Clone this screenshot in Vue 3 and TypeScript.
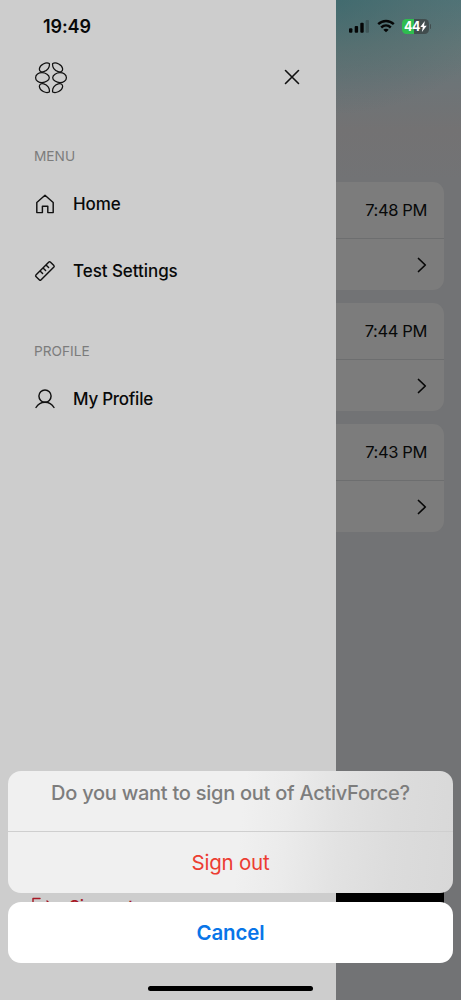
<script setup lang="ts">
interface Visit {
  time: string
}

const visits: Visit[] = [{ time: '7:48 PM' }, { time: '7:44 PM' }, { time: '7:43 PM' }]
</script>

<template>
  <div class="screen">
    <main class="dashboard">
      <section v-for="visit in visits" :key="visit.time" class="card">
        <div class="card-time"><span>{{ visit.time }}</span></div>
        <div class="card-link">
          <svg width="10" height="16" viewBox="0 0 10 16">
            <path d="M1.500 1.500 8.300 8l-6.800 6.500" />
          </svg>
        </div>
      </section>
      <div class="primary-button"></div>
    </main>

    <aside class="drawer">
      <header class="drawer-head">
        <svg class="logo" width="34" height="32" viewBox="0 0 34 32">
          <path d="M15.300 1.500C12-.2 5.800 2.700 5.400 6.800c-.2 2.800 2.100 3.500 4.400 2.800 3.500-1 6.300-4.500 5.500-8.100Z" />
          <path d="M18.700 1.500c3.300-1.700 9.500 1.200 9.900 5.300.2 2.800-2.100 3.500-4.400 2.800-3.500-1-6.300-4.500-5.500-8.100Z" />
          <path d="M1.600 15.700c0-3 3-5 6.400-5 3.600 0 7.300 2.600 7.300 5s-3.700 5-7.300 5c-3.400 0-6.400-2-6.400-5Z" />
          <path d="M32.400 15.700c0-3-3-5-6.400-5-3.600 0-7.300 2.600-7.300 5s3.700 5 7.300 5c3.400 0 6.400-2 6.400-5Z" />
          <path d="M15.300 30c-3.300 1.700-9.500-1.200-9.900-5.300-.2-2.800 2.100-3.500 4.400-2.800 3.500 1 6.300 4.500 5.500 8.100Z" />
          <path d="M18.700 30c3.300 1.700 9.500-1.200 9.900-5.300.2-2.800-2.100-3.500-4.400-2.800-3.500 1-6.300 4.500-5.500 8.100Z" />
        </svg>
        <svg class="close" width="16" height="16" viewBox="0 0 16 16">
          <path d="m1.500 1.500 13 13m0-13-13 13" />
        </svg>
      </header>
      <nav>
        <h2 class="menu-title">MENU</h2>
        <a class="item">
          <svg width="22" height="22" viewBox="0 0 22 22">
            <path d="M2.800 9.500 11 2.200l8.200 7.300v10.100h-5.400v-6.300H8.400v6.300H2.800Z" />
          </svg>
          <span class="home">Home</span>
        </a>
        <a class="item">
          <svg width="22" height="22" viewBox="0 0 22 22">
            <path d="m1.900 15.100 13-13.100q.7-.6 1.400 0l3.600 3.600q.6.700 0 1.400l-13 13q-.7.600-1.400 0l-3.600-3.600q-.6-.6 0-1.300ZM6 11l2.600 2.600M9 8l2.600 2.600m.4-5.700 2.600 2.600" />
          </svg>
          <span class="settings">Test Settings</span>
        </a>
        <h2 class="profile-title">PROFILE</h2>
        <a class="item">
          <svg width="22" height="22" viewBox="0 0 22 22">
            <circle cx="11" cy="8.100" r="6.100" />
            <path d="M2 19.500c2-3.400 5.200-5.300 9-5.300s7 1.900 9 5.300" />
          </svg>
          <span class="profile">My Profile</span>
        </a>
      </nav>
      <a class="sign-out">
        <svg width="22" height="20" viewBox="0 0 22 20">
          <path d="M8 1.500H1v17h7M7 9h13m-5-5 5 5-5 5" />
        </svg>
        <span>Sign out</span>
      </a>
    </aside>

    <div class="status">
      <span class="clock">19:49</span>
      <div class="indicators">
        <svg width="21" height="14" viewBox="0 0 21 14">
          <rect x="1" y="9.200" width="3.400" height="4.600" rx="1" />
          <rect x="6.700" y="7" width="3.400" height="6.800" rx="1" />
          <rect x="12.300" y="3.800" width="3.400" height="10" rx="1" />
          <rect x="17.600" y="1" width="3.400" height="12.800" rx="1" opacity=".22" />
        </svg>
        <svg class="wifi" width="18" height="14" viewBox="0 0 18 14">
          <path class="wave" d="M1.200 5.200c4.500-4.300 11.100-4.300 15.600 0M4.200 8.500c2.900-2.700 6.700-2.700 9.600 0" />
          <path d="M9 13.300 6.300 10.700q2.700-2.100 5.400 0Z" />
        </svg>
        <div class="battery">
          <span>44</span>
          <svg width="7" height="11" viewBox="0 0 7 11">
            <path d="M4.800 0 .3 6.100h2.500L1.900 11 6.700 4.700H4Z" />
          </svg>
        </div>
        <i class="battery-tip"></i>
      </div>
    </div>

    <div class="sheet">
      <div class="actions">
        <div class="question"><span>Do you want to sign out of ActivForce?</span></div>
        <div class="confirm"><span>Sign out</span></div>
      </div>
      <div class="cancel"><span>Cancel</span></div>
      <div class="home-bar"></div>
    </div>
  </div>
</template>

<style>
body {
  margin: 0;
}
</style>

<style scoped>
.screen {
  position: relative;
  width: 461px;
  height: 1000px;
  overflow: hidden;
  color: #080909;
  font-family: Inter, 'Liberation Sans', sans-serif;
}
svg {
  display: block;
  flex: none;
}
.dashboard {
  box-sizing: border-box;
  height: 1000px;
  padding: 182px 17px 0 0;
  display: flex;
  flex-direction: column;
  gap: 13px;
  position: relative;
  background:
    radial-gradient(ellipse 180px 120px at 325px -5px, rgba(50, 98, 102, .6), rgba(65, 100, 102, .35) 50%, transparent),
    linear-gradient(#54767a, #647778 45px, #6d7477 85px, #737273 130px, #727375 180px);
}
.card {
  height: 108px;
  border-radius: 11px;
  background: #7c7c7c;
}
.card-time,
.card-link {
  box-sizing: border-box;
  display: flex;
  align-items: center;
  justify-content: flex-end;
  padding-right: 17px;
}
.card-time {
  height: 56.500px;
  border-bottom: 1px solid #6d6e6f;
  font-size: 16.500px;
  letter-spacing: -.38px;
}
.card-link {
  height: 52px;
}
.card-link svg {
  fill: none;
  stroke: #080808;
  stroke-width: 1.700;
  stroke-linecap: round;
  stroke-linejoin: round;
}
.primary-button {
  height: 60px;
  margin-top: 314px;
  background: #000;
}
.drawer {
  position: absolute;
  inset: 0 auto 0 0;
  box-sizing: border-box;
  width: 336.300px;
  padding: 62px 36px 0 34px;
  display: flex;
  flex-direction: column;
  background: #cdcdcd;
}
.drawer svg {
  fill: none;
  stroke: #111;
  stroke-width: 1.450;
  stroke-linecap: round;
  stroke-linejoin: round;
}
.drawer-head {
  height: 32px;
  display: flex;
  align-items: center;
  justify-content: space-between;
}
.drawer .logo {
  stroke-width: 1.250;
}
.drawer .close {
  margin-top: -2px;
  stroke-width: 1.600;
}
nav {
  padding-top: 51.500px;
}
h2 {
  margin: 0;
  height: 20px;
  line-height: 20px;
  font-size: 13.700px;
  font-weight: 400;
  color: #7c7c7c;
}
.profile-title {
  margin-top: 36px;
}
.item {
  height: 67px;
  margin-top: 5px;
  display: flex;
  align-items: center;
  gap: 17px;
  font-size: 17px;
  font-weight: 500;
  letter-spacing: -.06px;
}
.profile {
  letter-spacing: -.25px;
}
.item + .item {
  margin-top: 0;
}
.sign-out {
  margin-top: auto;
  margin-bottom: 82px;
  margin-left: -2px;
  height: 22px;
  display: flex;
  align-items: center;
  gap: 15px;
  color: #a71925;
  font-size: 17px;
  font-weight: 500;
  letter-spacing: -.3px;
}
.drawer .sign-out svg {
  stroke: #a71925;
}
.status {
  position: absolute;
  inset: 0 0 auto 0;
  height: 52px;
  padding: 0 30px 0 43px;
  display: flex;
  align-items: center;
  justify-content: space-between;
}
.clock {
  font-size: 18px;
  font-weight: 600;
  letter-spacing: -.1px;
}
.indicators {
  display: flex;
  align-items: center;
  fill: #050606;
}
.wifi {
  margin: 0 7px 0 8px;
}
.wave {
  fill: none;
  stroke: #050606;
  stroke-width: 2.400;
}
.battery {
  width: 27px;
  height: 15px;
  border-radius: 4.500px;
  display: flex;
  align-items: center;
  justify-content: center;
  background: linear-gradient(90deg, #2fbd4f 44%, #414d4e 44%);
  color: #fff;
  fill: #fff;
  font-size: 12.500px;
  font-weight: 700;
  letter-spacing: -.5px;
}
.battery-tip {
  width: 1px;
  height: 5px;
  margin-left: 1px;
  border-radius: 0 2px 2px 0;
  background: #414d4e;
}
.sheet {
  position: absolute;
  inset: 770.500px 8px 0 8px;
  display: flex;
  flex-direction: column;
  align-items: center;
  text-align: center;
  font-size: 20.500px;
}
.actions {
  width: 100%;
  height: 122.500px;
  border-radius: 13px;
  overflow: hidden;
  background: linear-gradient(96deg, #f0f0f0 52%, #ebebeb 62%, #e2e2e2 74%, #dcdcdc 86%, #d8d8d8);
}
.question {
  box-sizing: border-box;
  height: 61px;
  line-height: 44px;
  border-bottom: 1px solid #cfcfcf;
  color: #7d7d7d;
  font-weight: 500;
  font-size: 20px;
  letter-spacing: -.26px;
}
.confirm {
  line-height: 62px;
  color: #ec3d32;
  letter-spacing: -.2px;
}
.cancel {
  width: 100%;
  height: 61px;
  line-height: 61px;
  margin-top: 9px;
  border-radius: 13px;
  background: #fff;
  color: #0875e8;
  font-weight: 600;
  letter-spacing: -.1px;
}
.home-bar {
  width: 165px;
  height: 5px;
  margin-top: 23px;
  border-radius: 3px;
  background: #000;
}
</style>
